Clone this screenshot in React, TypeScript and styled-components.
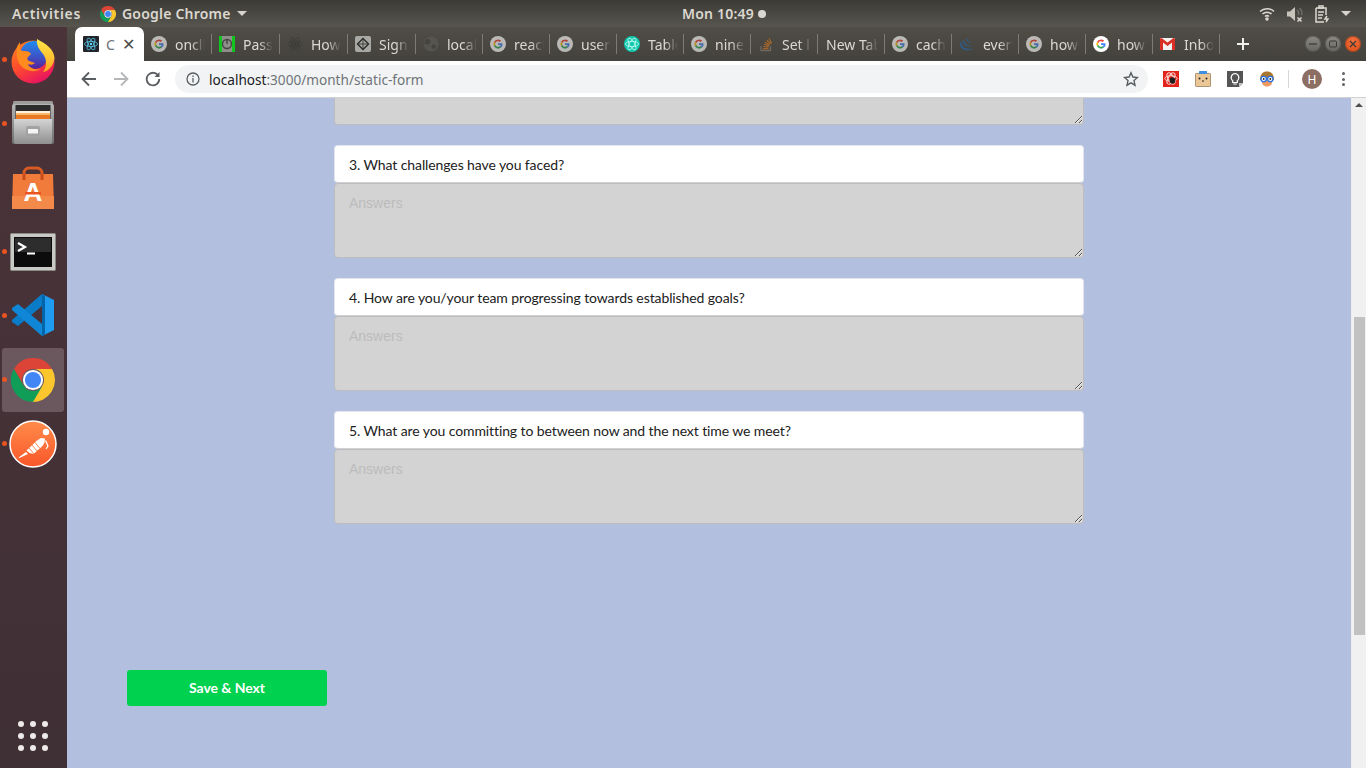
import React from "react";
import styled, { createGlobalStyle } from "styled-components";

const Global = createGlobalStyle`
  html, body { margin: 0; padding: 0; height: 100%; overflow: hidden; }
  #root { height: 100%; }
  * { box-sizing: border-box; }
`;

const Screen = styled.div`
  width: 1366px; height: 768px; display: flex; flex-direction: column; overflow: hidden;
  font-family: "Noto Sans", "Open Sans", sans-serif;
`;
const TopBar = styled.header`
  height: 27px; flex: none; display: flex; align-items: center; padding: 0 15px 0 12px;
  background: linear-gradient(#3c3b37, #57554e);
  color: #dcd8d0; font-size: 14px; font-weight: 600; letter-spacing: .2px;
`;
const Activities = styled.span`
  width: 68px; letter-spacing: .65px; white-space: nowrap;
`;
const AppMenu = styled.div`
  display: flex; align-items: center; gap: 6px; margin-left: 20px; width: 148px;
`;
const Caret = styled.span`
  width: 0; height: 0; border-left: 5px solid transparent; border-right: 5px solid transparent;
  border-top: 5px solid #d6d3cb;
`;
const Clock = styled.div`
  margin-left: 434px; display: flex; align-items: center; gap: 4px; width: 100px;
`;
const ClockDot = styled.span`
  width: 8px; height: 8px; border-radius: 50%; background: #d8d6d0;
`;
const Tray = styled.div`
  margin-left: auto; display: flex; align-items: center; gap: 12px;
`;
const Body = styled.div`
  flex: 1; display: flex; min-height: 0;
`;
const Dock = styled.nav`
  width: 67px; flex: none; display: flex; flex-direction: column; padding-top: 1px;
  background: linear-gradient(#4a3339, #3f3035);
`;
const DockItem = styled.div`
  position: relative; width: 62px; height: 64px; margin-left: 2px; border-radius: 3px;
  display: flex; align-items: center; justify-content: center;
  background: ${(p: { $active?: boolean }) => (p.$active ? "#6b585f" : "transparent")};
`;
const RunDot = styled.span`
  position: absolute; left: 0; top: 29px; width: 5px; height: 5px; border-radius: 50%; background: #e95420;
`;
const AppGrid = styled.div`
  margin-top: auto; margin-bottom: 17px; margin-left: 18px; width: 30px;
  display: grid; grid-template-columns: repeat(3, 6px); gap: 6px;
`;
const AppDot = styled.span`
  width: 6px; height: 6px; border-radius: 50%; background: #eeeaea;
`;
const Browser = styled.div`
  flex: 1; min-width: 0; display: flex; flex-direction: column;
`;
const TabBar = styled.div`
  height: 34px; flex: none; display: flex; align-items: stretch; padding-left: 8px;
  background: linear-gradient(#4f4d46, #44423c);
`;
const ActiveTab = styled.div`
  width: 69px; flex: none; display: flex; align-items: center; padding-left: 8px;
  background: #fff; border-radius: 7px 7px 0 0; color: #6c7075; font-size: 14px;
`;
const ActiveLabel = styled.span`
  margin-left: 7px; width: 12px; overflow: hidden;
`;
const Close = styled.span`
  margin-left: 4px; color: #4a4a4a; font-size: 16px; line-height: 1;
`;
const Tabs = styled.div`
  width: 1076px; flex: none; display: grid; grid-template-columns: repeat(4, 68px) repeat(12, 67px);
`;
const Tab = styled.div`
  position: relative; display: flex; align-items: center; padding-left: 7px; gap: 8px; min-width: 0;
  color: #dcd9d2; font-size: 14px;
  &::after { content: ""; position: absolute; right: 0; top: 7px; height: 20px; width: 1px; background: #7c7a73; }
`;
const TabLabel = styled.span`
  flex: none; width: 30px; overflow: hidden; white-space: nowrap;
  -webkit-mask-image: linear-gradient(90deg, #000 55%, transparent);
  mask-image: linear-gradient(90deg, #000 55%, transparent);
`;
const PlainLabel = styled(TabLabel)`
  width: 52px; margin-left: 1px;
  -webkit-mask-image: linear-gradient(90deg, #000 75%, transparent);
  mask-image: linear-gradient(90deg, #000 75%, transparent);
`;
const Plus = styled.div`
  width: 46px; flex: none; display: flex; align-items: center; justify-content: center;
`;
const WinButtons = styled.div`
  margin-left: auto; margin-right: 5px; display: flex; align-items: center; gap: 4px;
`;
const WinButton = styled.span`
  width: 16px; height: 16px; border-radius: 50%; display: flex; align-items: center; justify-content: center;
  background: ${(p: { $close?: boolean }) =>
    p.$close ? "radial-gradient(circle at 50% 30%, #f0703e, #dc4a12)" : "linear-gradient(#8b8983, #676560)"};
  box-shadow: inset 0 0 0 1px rgba(50, 48, 44, .35);
`;
const Toolbar = styled.div`
  height: 37px; flex: none; display: flex; align-items: center; padding-left: 14px;
  background: #fff; border-bottom: 1px solid #d2d2d2;
`;
const NavIcon = styled.span`
  width: 32px; flex: none; display: flex; align-items: center; justify-content: center;
`;
const NavIcons = styled.div`
  display: flex; margin-left: -8px; width: 102px; flex: none;
`;
const Omnibox = styled.div`
  width: 973px; height: 28px; flex: none; border-radius: 14px; background: #f1f3f4; display: flex; align-items: center;
  padding: 0 9px 0 11px; font-size: 13.6px; color: #6f7377;
`;
const Host = styled.span`
  color: #202124;
`;
const Url = styled.span`
  margin-left: 9px;
`;
const StarSlot = styled.span`
  margin-left: auto; display: flex;
`;
const Extensions = styled.div`
  display: flex; align-items: center; margin-left: 7px;
`;
const ExtSlot = styled.span`
  width: 32px; display: flex; justify-content: center;
`;
const ToolSep = styled.span`
  width: 1px; height: 18px; background: #d8d8d8; margin-left: 5px;
`;
const Avatar = styled.span`
  width: 20px; height: 20px; border-radius: 50%; background: #8d6e63; color: #fff; font-size: 12px;
  display: flex; align-items: center; justify-content: center; margin-left: 13px;
`;
const Kebab = styled.span`
  margin-left: 20px; display: flex; flex-direction: column; gap: 2.5px;
`;
const KebabDot = styled.i`
  width: 3px; height: 3px; border-radius: 50%; background: #5f6368; display: block;
`;
const Viewport = styled.div`
  flex: 1; min-height: 0; display: flex; background: #b2bfdf;
`;
const Page = styled.main`
  flex: 1; min-width: 0; display: flex; flex-direction: column; font-family: Lato, sans-serif;
`;
const Form = styled.form`
  width: 750px; margin-left: 267px; display: flex; flex-direction: column;
`;
const Question = styled.div`
  height: 38px; display: flex; align-items: center; padding: 1px 14px 0; margin-top: 20px;
  background: #fff; border: 1px solid #e3e6ef; border-bottom-color: #d0d1d4; border-radius: 4px;
  font-size: 14px; letter-spacing: -.1px; color: #212121;
`;
const Answer = styled.textarea`
  display: block; width: 750px; height: 75px; padding: 9px 14px; resize: both; outline: 0;
  background: #d3d3d3; border: 1px solid #bdbdbd; border-radius: 4px; color: #333;
  font: 14px/20px "Liberation Sans", Arial, sans-serif;
  &::placeholder { color: #bcbcbc; opacity: 1; }
`;
const ClippedAnswer = styled(Answer)`
  height: 27px; border-top: 0; border-radius: 0 0 4px 4px; padding: 0 14px;
`;
const SaveButton = styled.button`
  width: 200px; height: 36px; margin: 146px 0 0 60px; padding: 0 0 2px; border: 0; border-radius: 3px;
  background: #00d14f; color: #fff; font: 700 14px Lato, sans-serif; letter-spacing: -.05px;
`;
const Scrollbar = styled.aside`
  width: 15px; flex: none; background: #f1f1f1; display: flex; flex-direction: column; align-items: center;
  border-left: 1px solid #eee;
`;
const ScrollArrow = styled.span`
  width: 0; height: 0; margin-top: 5px; border-left: 4px solid transparent; border-right: 4px solid transparent;
  border-bottom: 4px solid #505050;
`;
const ScrollThumb = styled.span`
  width: 11px; height: 318px; margin-top: 210px; background: #c1c1c1;
`;

const ChromeLogo = ({ size = 48 }: { size?: number }) => (
  <svg width={size} height={size} viewBox="0 0 48 48">
    <path d="M3.2 12A24 24 0 0 1 44.8 12H24A12 12 0 0 0 13.6 30Z" fill="#db4437" />
    <path d="M44.8 12A24 24 0 0 1 22 47.9L34.4 30A12 12 0 0 0 24 12Z" fill="#fbc52d" />
    <path d="M24 48A24 24 0 0 1 3.2 12L13.6 30A12 12 0 0 0 34.4 30Z" fill="#0f9d58" />
    <circle cx="24" cy="24" r="11" fill="#fff" />
    <circle cx="24" cy="24" r="8.8" fill="#4285f4" />
  </svg>
);
const GoogleG = ({ dim }: { dim?: boolean }) => (
  <svg width="16" height="16" viewBox="0 0 16 16" opacity={dim ? 0.62 : 1} style={{ flex: "none" }}>
    <circle cx="8" cy="8" r="8" fill="#fff" />
    <path d="M8 3.4A4.6 4.6 0 0 1 11.1 4.6L9.8 5.9A2.8 2.8 0 0 0 5.4 7.1L3.9 5.9A4.6 4.6 0 0 1 8 3.4Z" fill="#ea4335" />
    <path d="M3.9 5.9L5.4 7.1A2.8 2.8 0 0 0 5.4 8.9L3.9 10.1A4.6 4.6 0 0 1 3.9 5.9Z" fill="#fbbc05" />
    <path d="M3.9 10.1L5.4 8.9A2.8 2.8 0 0 0 9.6 10.3L11 11.5A4.6 4.6 0 0 1 3.9 10.1Z" fill="#34a853" />
    <path d="M8 7.2H12.5A4.6 4.6 0 0 1 11 11.5L9.6 10.3A2 2 0 0 0 10.6 8.9H8Z" fill="#4285f4" />
  </svg>
);
const Atom = ({ color = "#61dafb", size = 16 }: { color?: string; size?: number }) => (
  <svg width={size} height={size} viewBox="0 0 16 16" fill="none" stroke={color} strokeWidth=".8" style={{ flex: "none" }}>
    <ellipse cx="8" cy="8" rx="7" ry="2.8" />
    <ellipse cx="8" cy="8" rx="7" ry="2.8" transform="rotate(60 8 8)" />
    <ellipse cx="8" cy="8" rx="7" ry="2.8" transform="rotate(120 8 8)" />
    <circle cx="8" cy="8" r="1.3" fill={color} />
  </svg>
);
const ReactFav = () => (
  <svg width="16" height="16" viewBox="0 0 16 16" style={{ flex: "none" }}>
    <rect width="16" height="16" rx="1" fill="#20232a" />
    <g fill="none" stroke="#61dafb" strokeWidth=".7">
      <ellipse cx="8" cy="8" rx="6.5" ry="2.6" />
      <ellipse cx="8" cy="8" rx="6.5" ry="2.6" transform="rotate(60 8 8)" />
      <ellipse cx="8" cy="8" rx="6.5" ry="2.6" transform="rotate(120 8 8)" />
    </g>
    <circle cx="8" cy="8" r="1.2" fill="#61dafb" />
  </svg>
);
const PassFav = () => (
  <svg width="16" height="16" viewBox="0 0 16 16" style={{ flex: "none" }}>
    <rect width="16" height="16" fill="#8f8e8a" />
    <rect width="3" height="16" fill="#12c41e" />
    <rect x="13" width="3" height="16" fill="#12c41e" />
    <circle cx="8" cy="8" r="4.5" fill="none" stroke="#444" strokeWidth="1.4" />
    <path d="M8 3v5" stroke="#444" strokeWidth="1.4" />
  </svg>
);
const SignFav = () => (
  <svg width="16" height="16" viewBox="0 0 16 16" style={{ flex: "none" }}>
    <rect width="16" height="16" rx="2" fill="#a8a8a4" />
    <path d="M8 2.5L13.5 8 8 13.5 2.5 8Z" fill="none" stroke="#2c2c2c" strokeWidth="1.4" />
    <path d="M2.5 8H13.5M8 2.5V13.5" stroke="#2c2c2c" strokeWidth=".8" />
  </svg>
);
const GlobeFav = () => (
  <svg width="16" height="16" viewBox="0 0 16 16" style={{ flex: "none" }}>
    <circle cx="8" cy="8" r="7.5" fill="#55544f" />
    <path d="M4 3c3 0 4 2 3 4s-4 1-5 1 0-4 2-5ZM9 9c2-1 4 0 4 1s-2 3-3 3-2-3-1-4Z" fill="#44433e" />
  </svg>
);
const TealFav = () => (
  <svg width="16" height="16" viewBox="0 0 16 16" style={{ flex: "none" }}>
    <circle cx="8" cy="8" r="8" fill="#11c9ae" />
    <g fill="none" stroke="#d8fff6" strokeWidth=".7">
      <ellipse cx="8" cy="8" rx="6.5" ry="2.6" />
      <ellipse cx="8" cy="8" rx="6.5" ry="2.6" transform="rotate(60 8 8)" />
      <ellipse cx="8" cy="8" rx="6.5" ry="2.6" transform="rotate(120 8 8)" />
    </g>
  </svg>
);
const StackFav = () => (
  <svg width="16" height="16" viewBox="0 0 16 16" style={{ flex: "none" }}>
    <path d="M3 10v4.5h9.5V10" fill="none" stroke="#6d6a62" strokeWidth="1.3" />
    <path d="M5 12.6h5.5M5.2 10.5l5.4.6M5.8 8.3l5.2 1.6M7 6.2l4.6 2.7M8.8 4.3l3.8 3.7M11 2.5l2.6 4.6" stroke="#a8662a" strokeWidth="1.2" fill="none" />
  </svg>
);
const JqueryFav = () => (
  <svg width="16" height="16" viewBox="0 0 16 16" style={{ flex: "none" }}>
    <path d="M2 5c0 6 6 10 12 7-3 4-12 3-13-3 0-2 0-3 1-4ZM5 3c0 5 4 8 9 6-3 3-10 1-10-3 0-1 0-2 1-3ZM9 1.5c-1 3 2 6 5 5-3 1.500-7-1-6-4Z" fill="#2f5b86" />
  </svg>
);
const GmailFav = () => (
  <svg width="16" height="16" viewBox="0 0 16 16" style={{ flex: "none" }}>
    <rect y="2" width="15" height="12" fill="#f2f2f2" />
    <path d="M0 2.500V14H3V6.500L7.500 10 12 6.500V14H15V2.500L13.500 2 7.500 6.500 1.500 2Z" fill="#d93025" />
  </svg>
);

const Firefox = () => (
  <svg width="44" height="46" viewBox="0 0 44 46" style={{ marginTop: 1 }}>
    <defs>
      <linearGradient id="ffBody" x1="0" y1="0" x2=".6" y2="1">
        <stop offset="0" stopColor="#ff8a1e" />
        <stop offset=".55" stopColor="#ff4a2e" />
        <stop offset="1" stopColor="#e8155f" />
      </linearGradient>
      <linearGradient id="ffGlobe" x1="0" y1="0" x2="0" y2="1">
        <stop offset="0" stopColor="#1f8df0" />
        <stop offset=".6" stopColor="#3f4fc4" />
        <stop offset="1" stopColor="#5a1f96" />
      </linearGradient>
      <linearGradient id="ffFlame" x1="0" y1="0" x2="0" y2="1">
        <stop offset="0" stopColor="#ffe84a" />
        <stop offset="1" stopColor="#ffa51f" />
      </linearGradient>
    </defs>
    <circle cx="22" cy="24" r="21.500" fill="url(#ffBody)" />
    <circle cx="23" cy="17" r="14" fill="url(#ffGlobe)" />
    <path d="M9 4C6 8 5 10 6 13c-1 4 0 10 4 15 5 5 13 7 20 3-6 1-12-1-13-5 2 1 5 1 7-1l-6-2c-2-1-2-3-1-4l3-3c-1-2-3-3-6-3-2 0-4 0-5-2 0-3 0-5 0-7Z" fill="#ff8a1e" />
    <path d="M26 1c-1 7 3 11 6 15 4 5 4 13 0 18 6-1 11-7 11.500-14C43 11 35 6 26 1Z" fill="url(#ffFlame)" />
  </svg>
);
const Cabinet = () => (
  <svg width="42" height="44" viewBox="0 0 42 44" style={{ marginBottom: 2 }}>
    <defs>
      <linearGradient id="cbFront" x1="0" y1="0" x2="0" y2="1">
        <stop offset="0" stopColor="#d4d4d4" />
        <stop offset="1" stopColor="#8f8f8f" />
      </linearGradient>
      <linearGradient id="cbSide" x1="0" y1="0" x2="0" y2="1">
        <stop offset="0" stopColor="#b5b5b5" />
        <stop offset="1" stopColor="#6f6f6f" />
      </linearGradient>
    </defs>
    <rect x="1" y="0" width="40" height="6" rx="1.500" fill="#9c9c9c" />
    <rect x="0" y="3" width="42" height="40" rx="2" fill="url(#cbSide)" />
    <rect x="3.500" y="4" width="35" height="14" fill="#2c2c2c" />
    <rect x="4" y="10" width="34" height="2" fill="#fff2dc" />
    <rect x="4" y="12" width="34" height="2" fill="#f8b76a" />
    <rect x="4" y="14" width="34" height="4" fill="#ea7a22" />
    <path d="M2 18H40V41a2 2 0 0 1-2 2H4a2 2 0 0 1-2-2Z" fill="url(#cbFront)" />
    <rect x="14" y="25" width="14" height="11" rx="2" fill="#a2a2a2" />
    <rect x="16" y="28" width="10" height="4.500" rx=".6" fill="#f4f4f4" />
  </svg>
);
const Store = () => (
  <svg width="42" height="44" viewBox="0 0 42 44">
    <path d="M12 14V7a5 5 0 0 1 5-5h8a5 5 0 0 1 5 5v7" fill="none" stroke="#d85b23" strokeWidth="3" />
    <path d="M1 8H41L42 43H0Z" fill="#f07b3a" />
    <path d="M0 30H42V43H0Z" fill="#f38a4a" />
    <path d="M12 14V8M30 14V8" stroke="#c94d1b" strokeWidth="3" />
    <text x="21" y="35" textAnchor="middle" fontFamily="Liberation Sans" fontWeight="700" fontSize="26" fill="#fff">A</text>
    <rect x="13" y="26" width="16" height="2.500" fill="#e95420" />
  </svg>
);
const Terminal = () => (
  <svg width="46" height="38" viewBox="0 0 46 38">
    <rect x=".5" y=".5" width="45" height="37" rx="1" fill="#c9c9c5" stroke="#8a8a86" />
    <rect x="4" y="4" width="38" height="30" fill="#0c0c0c" />
    <rect x="5" y="5" width="36" height="14" fill="#2d2d2d" />
    <path d="M8 10l7 4-7 4" fill="none" stroke="#fff" strokeWidth="2.200" />
    <path d="M17 20.500h8" stroke="#fff" strokeWidth="2" />
  </svg>
);
const VSCode = () => (
  <svg width="44" height="44" viewBox="0 1 44 44">
    <path d="M31 1L43 7V37L31 43Z" fill="#1f9cf0" />
    <path d="M31 1V13L7 33 1 29V27Z" fill="#0a7cc7" />
    <path d="M31 43V31L7 11 1 15V17Z" fill="#0f87d6" />
    <path d="M31 1L34 3V41L31 43Z" fill="#0065a9" />
  </svg>
);
const Postman = () => (
  <svg width="48" height="48" viewBox="0 0 48 48">
    <defs>
      <linearGradient id="pm" x1="0" y1="0" x2="0" y2="1">
        <stop offset="0" stopColor="#ff8c4a" />
        <stop offset="1" stopColor="#f9562a" />
      </linearGradient>
    </defs>
    <circle cx="24" cy="24" r="23" fill="url(#pm)" stroke="#fff" strokeWidth="1.500" />
    <path d="M9.500 37.500L17 32l2 2-8.500 4Z" fill="#fff" />
    <path d="M17.500 30.500L28 20.500l4-2.500 4 .5-.5 4-2 3.500-9 8-4-1Z" fill="#fff" />
    <path d="M20 28l5 6M23 25l5 6M26 22.500l5 6" stroke="#fb7a42" strokeWidth=".9" />
    <path d="M36.500 20.500l2.500 5.500-2 3" fill="none" stroke="#fff" strokeWidth="1.300" />
    <circle cx="37" cy="12" r="3.200" fill="#fff" />
  </svg>
);

const BugExt = () => (
  <svg width="16" height="16" viewBox="0 0 16 16">
    <rect width="16" height="16" fill="#e2231a" />
    <g fill="none" stroke="#ffd9d6" strokeWidth="1">
      <ellipse cx="8" cy="7.500" rx="6.200" ry="2.800" />
      <ellipse cx="8" cy="7.500" rx="6.200" ry="2.800" transform="rotate(60 8 7.500)" />
      <ellipse cx="8" cy="7.500" rx="6.200" ry="2.800" transform="rotate(120 8 7.500)" />
    </g>
    <ellipse cx="9.500" cy="9.500" rx="2.800" ry="3.200" fill="#1d1d1d" />
  </svg>
);
const BoxExt = () => (
  <svg width="16" height="16" viewBox="0 0 16 16">
    <rect x=".4" y="2.400" width="15.200" height="13.200" rx="1" fill="#ebc697" stroke="#8f7350" strokeWidth=".8" />
    <rect x="4" y="0" width="8" height="3" rx=".5" fill="#3f8fe0" />
    <circle cx="4.500" cy="7.500" r="1" fill="#222" /><circle cx="11.500" cy="7.500" r="1" fill="#222" />
    <rect x="7" y="9.500" width="2" height="1" fill="#222" />
  </svg>
);
const BulbExt = () => (
  <svg width="16" height="16" viewBox="0 0 16 16">
    <path d="M0 0H16V12L12 16H0Z" fill="#555" />
    <path d="M12 16V12H16Z" fill="#c4c4c4" />
    <path d="M8 2.500a4 4 0 0 1 2.300 7.100V11.500H5.700V9.600A4 4 0 0 1 8 2.500ZM6.200 13h3.600" fill="none" stroke="#fff" strokeWidth="1.200" />
  </svg>
);
const NerdExt = () => (
  <svg width="16" height="16" viewBox="0 0 16 16">
    <path d="M1 9C1 3 4 .5 8 .5S15 3 15 9Z" fill="#a8762f" />
    <path d="M3 9h10v2c0 3-2.500 4.500-5 4.500S3 14 3 11Z" fill="#ee9a62" />
    <circle cx="4.700" cy="8" r="2.700" fill="#fff" stroke="#2a72e0" strokeWidth="1.300" />
    <circle cx="11.300" cy="8" r="2.700" fill="#fff" stroke="#2a72e0" strokeWidth="1.300" />
    <circle cx="4.700" cy="8" r=".9" fill="#222" /><circle cx="11.300" cy="8" r=".9" fill="#222" />
  </svg>
);

const tabs: { label: string; icon?: React.ReactNode }[] = [
  { label: "onclick", icon: <GoogleG dim /> },
  { label: "Password", icon: <PassFav /> },
  { label: "How to", icon: <Atom color="#3c3b36" /> },
  { label: "Sign in", icon: <SignFav /> },
  { label: "localhost", icon: <GlobeFav /> },
  { label: "react", icon: <GoogleG dim /> },
  { label: "user", icon: <GoogleG dim /> },
  { label: "Table", icon: <TealFav /> },
  { label: "nine", icon: <GoogleG dim /> },
  { label: "Set l", icon: <StackFav /> },
  { label: "New Tab" },
  { label: "cache", icon: <GoogleG dim /> },
  { label: "every", icon: <JqueryFav /> },
  { label: "how", icon: <GoogleG dim /> },
  { label: "how", icon: <GoogleG /> },
  { label: "Inbox", icon: <GmailFav /> },
];

const questions = [
  "3. What challenges have you faced?",
  "4. How are you/your team progressing towards established goals?",
  "5. What are you committing to between now and the next time we meet?",
];

const dockApps = [
  { key: "firefox", node: <Firefox />, run: true },
  { key: "files", node: <Cabinet />, run: true },
  { key: "store", node: <Store /> },
  { key: "terminal", node: <Terminal />, run: true },
  { key: "code", node: <VSCode />, run: true },
  { key: "chrome", node: <ChromeLogo size={44} />, run: true, active: true },
  { key: "postman", node: <Postman />, run: true },
];

export default function App() {
  return (
    <Screen>
      <Global />
      <TopBar>
        <Activities>Activities</Activities>
        <AppMenu>
          <ChromeLogo size={16} />
          <span>Google Chrome</span>
          <Caret />
        </AppMenu>
        <Clock>
          <span>Mon 10:49</span>
          <ClockDot />
        </Clock>
        <Tray>
          <svg width="16" height="14" viewBox="0 0 16 14" fill="none" stroke="#dcd8d0" strokeWidth="1.500">
            <path d="M1 4.500a10 10 0 0 1 14 0M3.500 7a6.500 6.500 0 0 1 9 0M6 9.500a3 3 0 0 1 4 0" />
            <circle cx="8" cy="12" r="1" fill="#dcd8d0" />
          </svg>
          <svg width="16" height="16" viewBox="0 0 16 16" fill="none">
            <path d="M0 5.500H3L8 1V15L3 10.500H0Z" fill="#c7c4bc" />
            <path d="M10 4c1.500 1 2 3 1.500 5M12.500 2c2 2 3 5 2 7" stroke="#77756e" strokeWidth="1.200" />
            <path d="M10.500 11.500l4 4M14.500 11.500l-4 4" stroke="#dcd8d0" strokeWidth="1.500" />
          </svg>
          <svg width="14" height="18" viewBox="0 0 14 18" fill="none" stroke="#dcd8d0" strokeWidth="1.500">
            <path d="M1 3H11V10M1 3V17H9" />
            <path d="M4 1H8V3H4ZM3 7H9M3 10H8M3 13H7" />
            <path d="M12 11L10 14H13L11 17" />
          </svg>
          <Caret />
        </Tray>
      </TopBar>
      <Body>
        <Dock>
          {dockApps.map((a) => (
            <DockItem key={a.key} $active={a.active}>
              {a.run && <RunDot />}
              {a.node}
            </DockItem>
          ))}
          <AppGrid>
            {Array.from({ length: 9 }, (_, i) => (
              <AppDot key={i} />
            ))}
          </AppGrid>
        </Dock>
        <Browser>
          <TabBar>
            <ActiveTab>
              <ReactFav />
              <ActiveLabel>C</ActiveLabel>
              <Close>✕</Close>
            </ActiveTab>
            <Tabs>
              {tabs.map((t, i) => (
                <Tab key={i}>
                  {t.icon}
                  {t.icon ? <TabLabel>{t.label}</TabLabel> : <PlainLabel>{t.label}</PlainLabel>}
                </Tab>
              ))}
            </Tabs>
            <Plus>
              <svg width="14" height="14" viewBox="0 0 14 14">
                <path d="M7 1V13M1 7H13" stroke="#f0f0ee" strokeWidth="2" />
              </svg>
            </Plus>
            <WinButtons>
              <WinButton>
                <svg width="8" height="8" viewBox="0 0 8 8"><path d="M0 4H8" stroke="#3c3b37" strokeWidth="1.300" /></svg>
              </WinButton>
              <WinButton>
                <svg width="8" height="8" viewBox="0 0 8 8"><rect x=".5" y="1" width="7" height="6" rx="1" fill="none" stroke="#3c3b37" /></svg>
              </WinButton>
              <WinButton $close>
                <svg width="8" height="8" viewBox="0 0 8 8"><path d="M1 1L7 7M7 1L1 7" stroke="#3c3b37" strokeWidth="1.300" /></svg>
              </WinButton>
            </WinButtons>
          </TabBar>
          <Toolbar>
            <NavIcons>
              <NavIcon>
                <svg width="16" height="16" viewBox="0 0 16 16" fill="none" stroke="#5a5d60" strokeWidth="1.800">
                  <path d="M15 8H2M8 1.500L1.500 8 8 14.500" />
                </svg>
              </NavIcon>
              <NavIcon>
                <svg width="16" height="16" viewBox="0 0 16 16" fill="none" stroke="#b4b6b8" strokeWidth="1.800">
                  <path d="M1 8H14M8 1.500L14.500 8 8 14.500" />
                </svg>
              </NavIcon>
              <NavIcon>
                <svg width="16" height="16" viewBox="0 0 16 16" fill="none" stroke="#5a5d60" strokeWidth="1.800">
                  <path d="M13.500 5A6.300 6.300 0 1 0 14.300 8" />
                  <path d="M14.500 1V6H9.500" fill="#5a5d60" stroke="none" />
                </svg>
              </NavIcon>
            </NavIcons>
            <Omnibox>
              <svg width="14" height="14" viewBox="0 0 14 14" fill="none" stroke="#5a5d60" strokeWidth="1.300">
                <circle cx="7" cy="7" r="6" />
                <path d="M7 6V10.500M7 3.500V5" />
              </svg>
              <Url>
                <Host>localhost</Host>:3000/month/static-form
              </Url>
              <StarSlot>
                <svg width="16" height="16" viewBox="0 0 16 16" fill="none" stroke="#5a5d60" strokeWidth="1.400">
                  <path d="M8 1.800L9.900 6 14.500 6.500 11 9.600 12 14.200 8 11.800 4 14.200 5 9.600 1.500 6.500 6.100 6Z" />
                </svg>
              </StarSlot>
            </Omnibox>
            <Extensions>
              <ExtSlot><BugExt /></ExtSlot>
              <ExtSlot><BoxExt /></ExtSlot>
              <ExtSlot><BulbExt /></ExtSlot>
              <ExtSlot><NerdExt /></ExtSlot>
              <ToolSep />
              <Avatar>H</Avatar>
              <Kebab>
                <KebabDot /><KebabDot /><KebabDot />
              </Kebab>
            </Extensions>
          </Toolbar>
          <Viewport>
            <Page>
              <Form>
                <ClippedAnswer readOnly aria-label="Answer 2" />
                {questions.map((q) => (
                  <React.Fragment key={q}>
                    <Question>{q}</Question>
                    <Answer placeholder="Answers" readOnly />
                  </React.Fragment>
                ))}
              </Form>
              <SaveButton type="button">Save &amp; Next</SaveButton>
            </Page>
            <Scrollbar>
              <ScrollArrow />
              <ScrollThumb />
            </Scrollbar>
          </Viewport>
        </Browser>
      </Body>
    </Screen>
  );
}
